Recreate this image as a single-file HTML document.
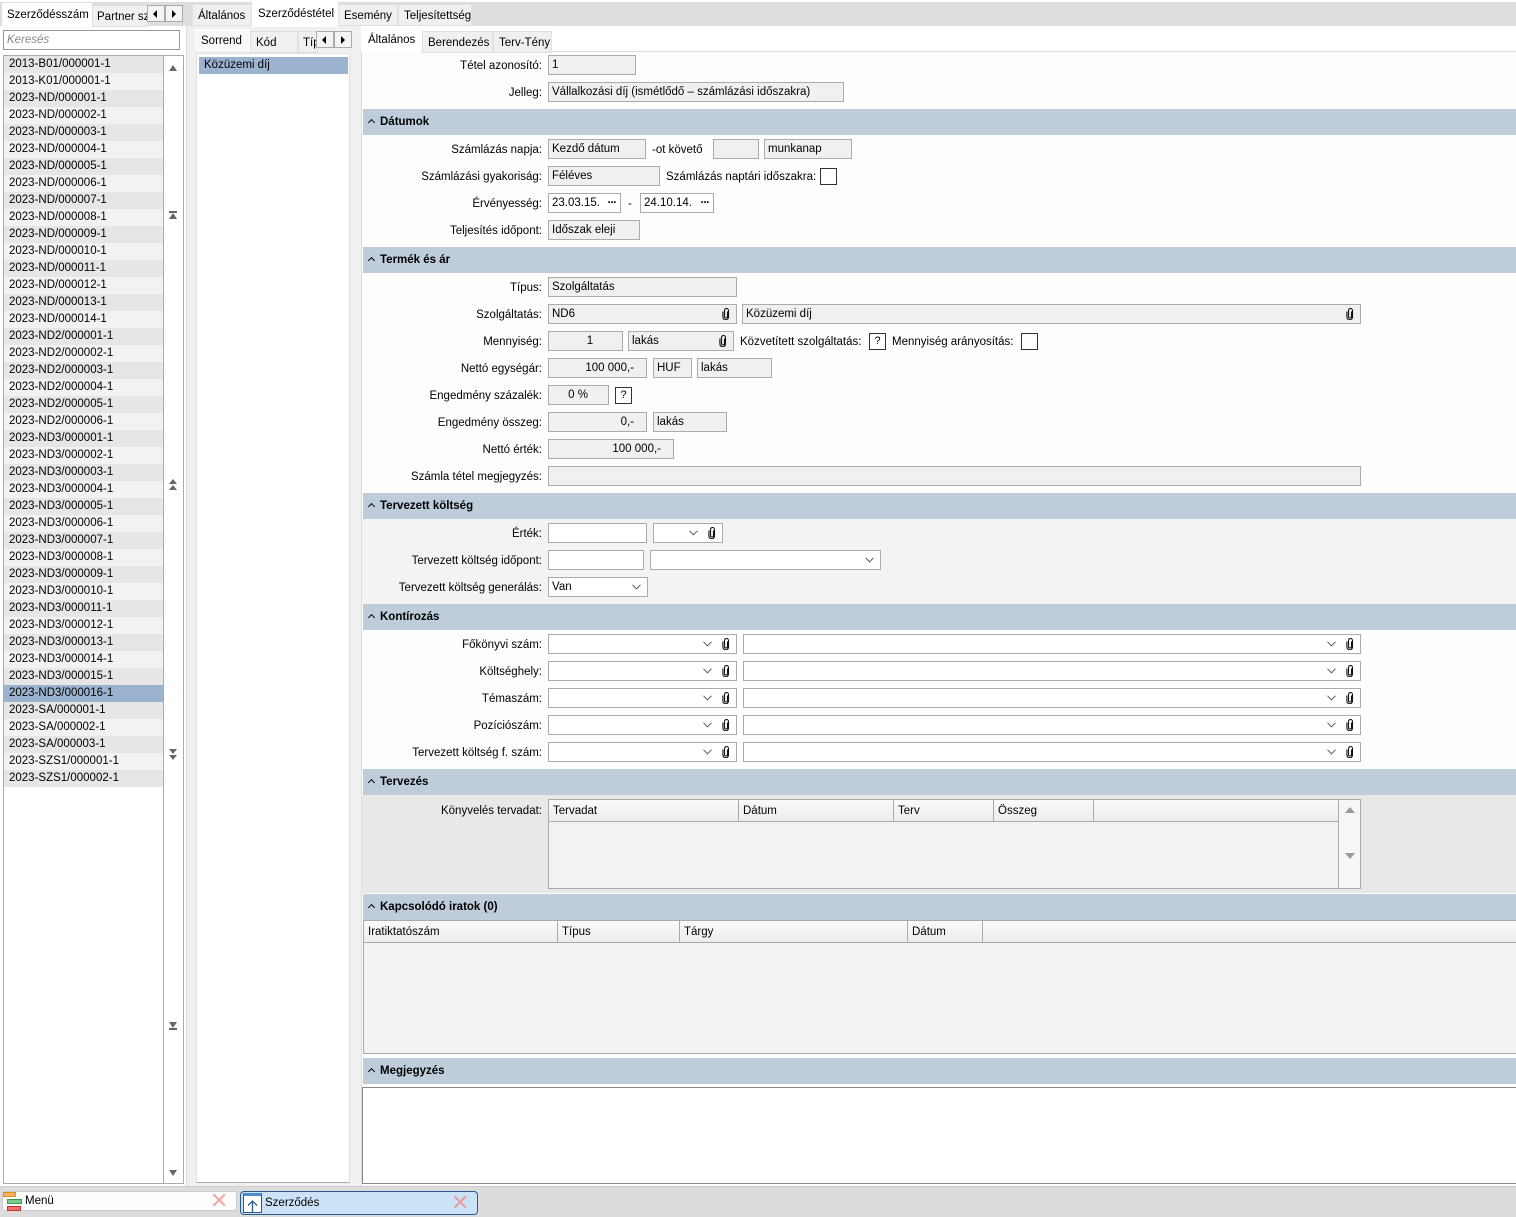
<!DOCTYPE html>
<html><head><meta charset="utf-8">
<style>
*{box-sizing:border-box}
body{margin:0;width:1516px;height:1217px;position:relative;overflow:hidden;background:#f0f0f0;font-family:"Liberation Sans",sans-serif;font-size:11.5px;color:#000}
.a{position:absolute}
.l{position:absolute;left:300px;width:242px;text-align:right;height:19px;line-height:21px;white-space:nowrap}
.i{position:absolute;height:20px;border:1px solid #ababab;background:#f0f0f0;padding:0 3px;line-height:19px;white-space:nowrap;overflow:hidden}
.w{background:#fff}
.r{text-align:right;padding-right:12px}
.c{text-align:center}
.sec{position:absolute;left:363px;width:1153px;height:26px;background:#bfcddb;font-weight:bold;line-height:26px;padding-left:17px}
.sec:before{content:"";position:absolute;left:6px;top:11px;width:4px;height:4px;border-left:1.5px solid #000;border-top:1.5px solid #000;transform:rotate(45deg)}
.tab{position:absolute;height:22px;line-height:22px;padding:0 5px;background:#f0f0f0;border:1px solid #e0e0e0;white-space:nowrap;overflow:hidden}
.tab.s{background:#fff;border-color:#fff}
.li{height:17px;line-height:17px;padding-left:5px;white-space:nowrap}
.li:nth-child(odd){background:#e6e6e6}.li:nth-child(even){background:#f2f2f2}
.cl{position:absolute;top:3px;width:8px;height:12px}
.ch{position:absolute;top:6px;width:9px;height:6px}
.cb{position:absolute;width:17px;height:17px;border:1px solid #333;background:#fff}
.hd{position:absolute;height:22px;line-height:22px;padding-left:4px;border-right:1px solid #aaa;background:linear-gradient(#fafafa,#ececec);border-bottom:1px solid #aaa}
.arr{position:absolute;width:0;height:0;border-left:4px solid transparent;border-right:4px solid transparent}
.dots{position:absolute;right:4px;top:0;font-weight:bold;letter-spacing:-1px}
</style></head><body>
<svg width="0" height="0" style="position:absolute"><defs>
<symbol id="clip" viewBox="0 0 8 12"><path d="M5.5 3.5v5a1.5 1.5 0 0 1-3 0V2.5a2 2 0 0 1 4 0v6.5a2.8 2.8 0 0 1-5.6 0V3.5" fill="none" stroke="#111" stroke-width="1.1"/></symbol>
<symbol id="chev" viewBox="0 0 9 6"><path d="M0.5 0.8L4.5 4.8L8.5 0.8" fill="none" stroke="#555" stroke-width="1"/></symbol>
</defs></svg>

<div class="a" style="left:0;top:0;width:1516px;height:2px;background:#fff"></div>
<div class="a" style="left:0;top:2px;width:1516px;height:24px;background:#dedede"></div>
<div class="a" style="left:0;top:26px;width:1516px;height:1px;background:#ccc"></div>

<!-- left panel -->
<div class="a" style="left:0;top:26px;width:186px;height:1162px;background:#fff"></div>
<div class="tab s" style="left:2px;top:3px;width:90px;height:24px;padding:0 4px">Szerződésszám</div>
<div class="tab" style="left:92px;top:5px;width:56px;padding:0 4px">Partner sz</div>
<div class="a" style="left:147px;top:5px;width:18px;height:17px;border:1px solid #aaa;background:#f4f4f4"></div>
<div class="a" style="left:165px;top:5px;width:18px;height:17px;border:1px solid #aaa;background:#f4f4f4"></div>
<div class="arr" style="left:153px;top:10px;border:none;border-top:4px solid transparent;border-bottom:4px solid transparent;border-right:4px solid #000"></div>
<div class="arr" style="left:172px;top:10px;border:none;border-top:4px solid transparent;border-bottom:4px solid transparent;border-left:4px solid #000"></div>
<div class="i w" style="left:3px;top:30px;width:177px;height:20px;border-color:#999;color:#888;font-style:italic">Keresés</div>
<div class="a" style="left:3px;top:55px;width:181px;height:1129px;border:1px solid #aaa;background:#fff"></div>
<div class="a" style="left:163px;top:56px;width:1px;height:1127px;background:#aaa"></div>
<div class="a" style="left:4px;top:56px;width:159px">
<div class="li">2013-B01/000001-1</div><div class="li">2013-K01/000001-1</div>
<div class="li">2023-ND/000001-1</div><div class="li">2023-ND/000002-1</div><div class="li">2023-ND/000003-1</div><div class="li">2023-ND/000004-1</div><div class="li">2023-ND/000005-1</div><div class="li">2023-ND/000006-1</div><div class="li">2023-ND/000007-1</div><div class="li">2023-ND/000008-1</div><div class="li">2023-ND/000009-1</div><div class="li">2023-ND/000010-1</div><div class="li">2023-ND/000011-1</div><div class="li">2023-ND/000012-1</div><div class="li">2023-ND/000013-1</div><div class="li">2023-ND/000014-1</div>
<div class="li">2023-ND2/000001-1</div><div class="li">2023-ND2/000002-1</div><div class="li">2023-ND2/000003-1</div><div class="li">2023-ND2/000004-1</div><div class="li">2023-ND2/000005-1</div><div class="li">2023-ND2/000006-1</div>
<div class="li">2023-ND3/000001-1</div><div class="li">2023-ND3/000002-1</div><div class="li">2023-ND3/000003-1</div><div class="li">2023-ND3/000004-1</div><div class="li">2023-ND3/000005-1</div><div class="li">2023-ND3/000006-1</div><div class="li">2023-ND3/000007-1</div><div class="li">2023-ND3/000008-1</div><div class="li">2023-ND3/000009-1</div><div class="li">2023-ND3/000010-1</div><div class="li">2023-ND3/000011-1</div><div class="li">2023-ND3/000012-1</div><div class="li">2023-ND3/000013-1</div><div class="li">2023-ND3/000014-1</div><div class="li">2023-ND3/000015-1</div><div class="li" style="background:#9bb3cf">2023-ND3/000016-1</div>
<div class="li">2023-SA/000001-1</div><div class="li">2023-SA/000002-1</div><div class="li">2023-SA/000003-1</div><div class="li">2023-SZS1/000001-1</div><div class="li">2023-SZS1/000002-1</div>
</div>
<div class="arr" style="left:169px;top:65px;border-bottom:6px solid #666"></div>
<div class="a" style="left:169px;top:211px;width:8px;height:2px;background:#666"></div><div class="arr" style="left:169px;top:213px;border-bottom:6px solid #666"></div>
<div class="arr" style="left:169px;top:479px;border-bottom:5px solid #666"></div><div class="arr" style="left:169px;top:485px;border-bottom:5px solid #666"></div>
<div class="arr" style="left:169px;top:749px;border-top:5px solid #666"></div><div class="arr" style="left:169px;top:755px;border-top:5px solid #666"></div>
<div class="arr" style="left:169px;top:1022px;border-top:6px solid #666"></div><div class="a" style="left:169px;top:1028px;width:8px;height:2px;background:#666"></div>
<div class="arr" style="left:169px;top:1170px;border-top:6px solid #666"></div>
<div class="a" style="left:186px;top:26px;width:5px;height:1162px;background:#f0f0f0;border-left:1px solid #ddd"></div>

<!-- middle -->
<div class="a" style="left:191px;top:26px;width:163px;height:1162px;background:#f0f0f0"></div>
<div class="tab" style="left:192px;top:4px;width:60px">Általános</div>
<div class="tab s" style="left:252px;top:2px;width:86px;height:25px">Szerződéstétel</div>
<div class="tab" style="left:338px;top:4px;width:60px">Esemény</div>
<div class="tab" style="left:398px;top:4px;width:74px">Teljesítettség</div>
<div class="tab s" style="left:195px;top:29px;width:55px;background:#f8f8f8">Sorrend</div>
<div class="tab" style="left:250px;top:31px;width:48px">Kód</div>
<div class="tab" style="left:298px;top:31px;width:20px;padding-left:4px">Típ</div>
<div class="a" style="left:316px;top:31px;width:18px;height:17px;border:1px solid #aaa;background:#f4f4f4"></div>
<div class="a" style="left:334px;top:31px;width:18px;height:17px;border:1px solid #aaa;background:#f4f4f4"></div>
<div class="arr" style="left:322px;top:36px;border:none;border-top:4px solid transparent;border-bottom:4px solid transparent;border-right:4px solid #000"></div>
<div class="arr" style="left:341px;top:36px;border:none;border-top:4px solid transparent;border-bottom:4px solid transparent;border-left:4px solid #000"></div>
<div class="a" style="left:196px;top:53px;width:154px;height:1130px;background:#fff;border:1px solid #e0e0e0;border-bottom:1px solid #aaa"></div>
<div class="a" style="left:199px;top:57px;width:149px;height:17px;background:#9bb3cf;line-height:17px;padding-left:5px">Közüzemi díj</div>
<div class="a" style="left:354px;top:26px;width:7px;height:1162px;background:#f0f0f0"></div>

<!-- right -->
<div class="a" style="left:361px;top:52px;width:1155px;height:1136px;background:#fdfdfd;border-left:1px solid #ddd"></div>
<div class="a" style="left:361px;top:26px;width:1155px;height:26px;background:#fff;border-bottom:1px solid #ddd"></div>
<div class="tab s" style="left:362px;top:28px;width:60px;height:24px">Általános</div>
<div class="tab" style="left:422px;top:31px;width:71px">Berendezés</div>
<div class="tab" style="left:493px;top:31px;width:59px">Terv-Tény</div>

<div class="l" style="top:56px">Tétel azonosító:</div><div class="i" style="left:548px;top:55px;width:88px">1</div>
<div class="l" style="top:83px">Jelleg:</div><div class="i" style="left:548px;top:82px;width:296px">Vállalkozási díj (ismétlődő – számlázási időszakra)</div>

<div class="sec" style="top:109px">Dátumok</div>
<div class="l" style="top:140px">Számlázás napja:</div><div class="i" style="left:548px;top:139px;width:98px">Kezdő dátum</div>
<div class="a" style="left:652px;top:140px;line-height:21px">-ot követő</div>
<div class="i" style="left:713px;top:139px;width:46px"></div>
<div class="i" style="left:764px;top:139px;width:88px">munkanap</div>
<div class="l" style="top:167px">Számlázási gyakoriság:</div><div class="i" style="left:548px;top:166px;width:112px">Féléves</div>
<div class="a" style="left:666px;top:167px;line-height:21px">Számlázás naptári időszakra:</div><div class="cb" style="left:820px;top:168px"></div>
<div class="l" style="top:194px">Érvényesség:</div><div class="i w" style="left:548px;top:193px;width:73px">23.03.15.<span class="dots">···</span></div>
<div class="a" style="left:628px;top:194px;line-height:21px">-</div>
<div class="i w" style="left:640px;top:193px;width:74px">24.10.14.<span class="dots">···</span></div>
<div class="l" style="top:221px">Teljesítés időpont:</div><div class="i" style="left:548px;top:220px;width:92px">Időszak eleji</div>

<div class="sec" style="top:247px">Termék és ár</div>
<div class="l" style="top:278px">Típus:</div><div class="i" style="left:548px;top:277px;width:189px">Szolgáltatás</div>
<div class="l" style="top:305px">Szolgáltatás:</div><div class="i" style="left:548px;top:304px;width:189px">ND6<svg class="cl" style="right:6px"><use href="#clip"/></svg></div>
<div class="i" style="left:742px;top:304px;width:619px">Közüzemi díj<svg class="cl" style="right:6px"><use href="#clip"/></svg></div>
<div class="l" style="top:332px">Mennyiség:</div><div class="i c" style="left:548px;top:331px;width:75px;padding-left:12px">1</div>
<div class="i" style="left:628px;top:331px;width:106px">lakás<svg class="cl" style="right:6px"><use href="#clip"/></svg></div>
<div class="a" style="left:740px;top:332px;line-height:21px">Közvetített szolgáltatás:</div><div class="cb" style="left:869px;top:333px;text-align:center;line-height:15px;font-size:11px">?</div>
<div class="a" style="left:892px;top:332px;line-height:21px">Mennyiség arányosítás:</div><div class="cb" style="left:1021px;top:333px"></div>
<div class="l" style="top:359px">Nettó egységár:</div><div class="i r" style="left:548px;top:358px;width:99px">100 000,-</div>
<div class="i" style="left:653px;top:358px;width:39px">HUF</div>
<div class="i" style="left:697px;top:358px;width:75px">lakás</div>
<div class="l" style="top:386px">Engedmény százalék:</div><div class="i r" style="left:548px;top:385px;width:61px;padding-right:20px">0 %</div>
<div class="cb" style="left:615px;top:387px;text-align:center;line-height:15px;font-size:11px">?</div>
<div class="l" style="top:413px">Engedmény összeg:</div><div class="i r" style="left:548px;top:412px;width:99px">0,-</div>
<div class="i" style="left:653px;top:412px;width:74px">lakás</div>
<div class="l" style="top:440px">Nettó érték:</div><div class="i r" style="left:548px;top:439px;width:126px">100 000,-</div>
<div class="l" style="top:467px">Számla tétel megjegyzés:</div><div class="i" style="left:548px;top:466px;width:813px"></div>

<div class="sec" style="top:493px">Tervezett költség</div>
<div class="a" style="left:362px;top:519px;width:1154px;height:85px;background:#f3f3f3"></div>
<div class="l" style="top:524px">Érték:</div><div class="i w" style="left:548px;top:523px;width:99px"></div>
<div class="i w" style="left:653px;top:523px;width:70px"><svg class="ch" style="right:24px"><use href="#chev"/></svg><svg class="cl" style="right:6px"><use href="#clip"/></svg></div>
<div class="l" style="top:551px">Tervezett költség időpont:</div><div class="i w" style="left:548px;top:550px;width:96px"></div>
<div class="i w" style="left:650px;top:550px;width:231px"><svg class="ch" style="right:6px"><use href="#chev"/></svg></div>
<div class="l" style="top:578px">Tervezett költség generálás:</div><div class="i w" style="left:548px;top:577px;width:100px">Van<svg class="ch" style="right:6px"><use href="#chev"/></svg></div>

<div class="sec" style="top:604px">Kontírozás</div>
<div class="l" style="top:635px">Főkönyvi szám:</div>
<div class="l" style="top:662px">Költséghely:</div>
<div class="l" style="top:689px">Témaszám:</div>
<div class="l" style="top:716px">Pozíciószám:</div>
<div class="l" style="top:743px">Tervezett költség f. szám:</div>
<div class="i w" style="left:548px;top:634px;width:189px"><svg class="ch" style="right:24px"><use href="#chev"/></svg><svg class="cl" style="right:6px"><use href="#clip"/></svg></div>
<div class="i w" style="left:743px;top:634px;width:618px"><svg class="ch" style="right:24px"><use href="#chev"/></svg><svg class="cl" style="right:6px"><use href="#clip"/></svg></div>
<div class="i w" style="left:548px;top:661px;width:189px"><svg class="ch" style="right:24px"><use href="#chev"/></svg><svg class="cl" style="right:6px"><use href="#clip"/></svg></div>
<div class="i w" style="left:743px;top:661px;width:618px"><svg class="ch" style="right:24px"><use href="#chev"/></svg><svg class="cl" style="right:6px"><use href="#clip"/></svg></div>
<div class="i w" style="left:548px;top:688px;width:189px"><svg class="ch" style="right:24px"><use href="#chev"/></svg><svg class="cl" style="right:6px"><use href="#clip"/></svg></div>
<div class="i w" style="left:743px;top:688px;width:618px"><svg class="ch" style="right:24px"><use href="#chev"/></svg><svg class="cl" style="right:6px"><use href="#clip"/></svg></div>
<div class="i w" style="left:548px;top:715px;width:189px"><svg class="ch" style="right:24px"><use href="#chev"/></svg><svg class="cl" style="right:6px"><use href="#clip"/></svg></div>
<div class="i w" style="left:743px;top:715px;width:618px"><svg class="ch" style="right:24px"><use href="#chev"/></svg><svg class="cl" style="right:6px"><use href="#clip"/></svg></div>
<div class="i w" style="left:548px;top:742px;width:189px"><svg class="ch" style="right:24px"><use href="#chev"/></svg><svg class="cl" style="right:6px"><use href="#clip"/></svg></div>
<div class="i w" style="left:743px;top:742px;width:618px"><svg class="ch" style="right:24px"><use href="#chev"/></svg><svg class="cl" style="right:6px"><use href="#clip"/></svg></div>

<div class="sec" style="top:769px">Tervezés</div>
<div class="a" style="left:362px;top:795px;width:1154px;height:98px;background:#e8e8e8"></div>
<div class="l" style="top:801px">Könyvelés tervadat:</div>
<div class="a" style="left:548px;top:799px;width:813px;height:90px;border:1px solid #aaa;background:#f2f2f2"></div>
<div class="hd" style="left:549px;top:800px;width:190px">Tervadat</div>
<div class="hd" style="left:739px;top:800px;width:155px">Dátum</div>
<div class="hd" style="left:894px;top:800px;width:100px">Terv</div>
<div class="hd" style="left:994px;top:800px;width:100px">Összeg</div>
<div class="hd" style="left:1094px;top:800px;width:245px"></div>
<div class="a" style="left:1338px;top:800px;width:22px;height:88px;border-left:1px solid #aaa;background:#f6f6f6"></div>
<div class="arr" style="left:1345px;top:807px;border-left-width:5px;border-right-width:5px;border-bottom:6px solid #999"></div>
<div class="arr" style="left:1345px;top:853px;border-left-width:5px;border-right-width:5px;border-top:6px solid #999"></div>

<div class="sec" style="top:894px">Kapcsolódó iratok (0)</div>
<div class="a" style="left:363px;top:920px;width:1153px;height:134px;border:1px solid #aaa;border-right:none;background:#f2f2f2"></div>
<div class="hd" style="left:364px;top:921px;width:194px">Iratiktatószám</div>
<div class="hd" style="left:558px;top:921px;width:122px">Típus</div>
<div class="hd" style="left:680px;top:921px;width:228px">Tárgy</div>
<div class="hd" style="left:908px;top:921px;width:75px">Dátum</div>
<div class="hd" style="left:983px;top:921px;width:533px;border-right:none"></div>

<div class="sec" style="top:1058px">Megjegyzés</div>
<div class="a" style="left:362px;top:1087px;width:1154px;height:97px;background:#fff;border:1px solid #888;border-right:none"></div>

<!-- bottom taskbar -->
<div class="a" style="left:0;top:1186px;width:1516px;height:31px;background:#dcdcdc;border-top:1px solid #ccc"></div>
<div class="a" style="left:2px;top:1191px;width:235px;height:20px;background:#fdfdfd;border:1px solid #ccc;border-radius:3px"></div>
<div class="a" style="left:3px;top:1192px;width:13px;height:5px;background:#f3b25e;border:1px solid #e08a20"></div>
<div class="a" style="left:7px;top:1199px;width:15px;height:5px;background:#7cc98c;border:1px solid #3a9a4e"></div>
<div class="a" style="left:7px;top:1206px;width:14px;height:5px;background:#f07070;border:1px solid #d03030"></div>
<div class="a" style="left:25px;top:1193px;line-height:16px">Menü</div>
<div class="a" style="left:210px;top:1190px;font-size:22px;line-height:22px;color:#f0a8a8">✕</div>
<div class="a" style="left:240px;top:1191px;width:238px;height:24px;background:#cce3f7;border:1px solid #2b5a8a;border-radius:4px"></div>
<div class="a" style="left:243px;top:1193px;width:19px;height:20px;border:1px solid #2b5a8a;border-top:3px solid #4a8acf;background:#fff"></div>
<svg class="a" style="left:246px;top:1199px" width="13" height="13"><path d="M6.5 13V2M2 6.5L6.5 2L11 6.5" fill="none" stroke="#2b5a8a" stroke-width="1.3"/></svg>
<div class="a" style="left:265px;top:1196px;line-height:14px">Szerződés</div>
<div class="a" style="left:451px;top:1192px;font-size:22px;line-height:22px;color:#e6a0a0">✕</div>
</body></html>
